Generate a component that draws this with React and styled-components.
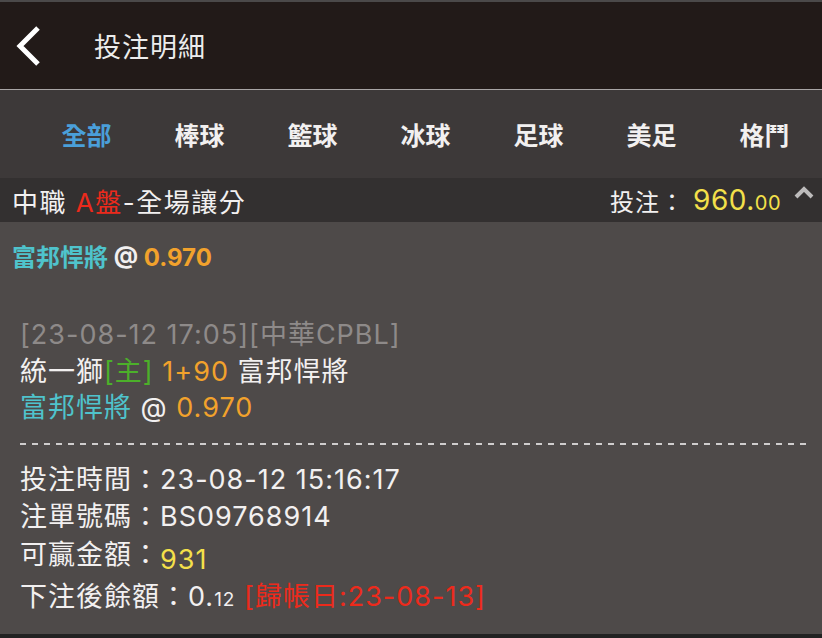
import React from "react";
import { styled, createGlobalStyle } from "styled-components";

/***********************Styles*************************/
//variables
const cjk = `"Inter", "Noto Sans CJK TC", sans-serif`;
const white = "#f2f0f0";
const teal = "#4fc3cc";
const orange = "#f2a22c";
const yellow = "#f4e04a";
const red = "#ec2a1c";
const green = "#4cb02a";
//variables

const Global = createGlobalStyle`
  body {
    margin: 0;
    background: #4e4a49;
    font-family: ${cjk};
    color: ${white};
  }
`;

const Page = styled.div`
  height: 100vh;
  display: flex;
  flex-direction: column;
  background: #4e4a49;
`;

const Header = styled.header`
  height: 87px;
  border-top: 2px solid #4b4949;
  border-bottom: 1px solid #a9a5a5;
  background: #221a18;
  display: flex;
  align-items: center;
  padding-left: 14px;
`;

const Title = styled.h1`
  margin: 0 0 0 50px;
  font-size: 27px;
  font-weight: 400;
  letter-spacing: 1px;
  color: #ececec;
`;

const Tabs = styled.nav`
  height: 88px;
  background: #3d3939;
  display: flex;
  padding-left: 30px;
`;

const Tab = styled.div`
  width: 113px;
  flex-shrink: 0;
  display: flex;
  align-items: center;
  justify-content: center;
  font-size: 25px;
  font-weight: 700;
  color: ${(p) => (p.$active ? "#4a9fd9" : white)};
`;

const SubBar = styled.div`
  height: 44px;
  background: #333030;
  display: flex;
  align-items: center;
  justify-content: space-between;
  padding: 0 7px 0 12px;
  font-size: 26px;
  letter-spacing: 1.5px;
`;

const Stake = styled.div`
  display: flex;
  align-items: center;
  font-size: 24px;
  letter-spacing: 1px;
`;

const Amount = styled.span`
  color: ${yellow};
  font-size: 28px;
  letter-spacing: 0.5px;
  margin-left: 8px;
`;

const Small = styled.span`
  font-size: ${(p) => p.$size || "19px"};
`;

const Content = styled.main`
  flex: 1;
  padding: 18px 0 0 12px;
`;

const Pick = styled.div`
  font-size: 24px;
  font-weight: 700;
  line-height: 36px;
`;

const Block = styled.div`
  margin-top: 41px;
  padding-left: 8px;
  font-size: 27px;
  letter-spacing: 1px;
  line-height: 36.5px;
`;

const Line = styled.div`
  white-space: nowrap;
`;

const Dash = styled.div`
  height: 2px;
  width: 788px;
  margin: 16px 0 16px;
  background: repeating-linear-gradient(90deg, #cfcdcd 0 6px, transparent 6px 12px);
`;

const Detail = styled.div`
  line-height: 37.5px;
`;

const C = styled.span`
  color: ${(p) => p.$c};
`;

const Drop = styled.span`
  color: ${yellow};
  vertical-align: -5px;
`;

const Footer = styled.div`
  height: 4px;
  background: #222;
`;

/***********************Component*************************/

const Back = () => (
  <svg width="30" height="44" viewBox="0 0 30 44">
    <path d="M24 4 L6 22 L24 40" fill="none" stroke="#fff" strokeWidth="5" />
  </svg>
);

const Up = () => (
  <svg width="22" height="14" viewBox="0 0 22 14" style={{ alignSelf: "flex-start", margin: "2px 0 0 12px" }}>
    <path d="M3 12 L11 4 L19 12" fill="none" stroke="#bdbbbb" strokeWidth="4" />
  </svg>
);

const tabs = ["全部", "棒球", "籃球", "冰球", "足球", "美足", "格鬥"];

const App = () => {
  return (
    <Page>
      <Global />
      <Header>
        <Back />
        <Title>投注明細</Title>
      </Header>
      <Tabs>
        {tabs.map((t, i) => (
          <Tab key={t} $active={i === 0}>
            {t}
          </Tab>
        ))}
      </Tabs>
      <SubBar>
        <div>
          中職 <C $c={red}>A盤</C>-全場讓分
        </div>
        <Stake>
          投注：
          <Amount>
            960.<Small $size="20px">00</Small>
          </Amount>
          <Up />
        </Stake>
      </SubBar>
      <Content>
        <Pick>
          <C $c={teal}>富邦悍將</C> @ <C $c={orange}>0.970</C>
        </Pick>
        <Block>
          <Line>
            <C $c="#8e8a89">[23-08-12 17:05][中華CPBL]</C>
          </Line>
          <Line>
            統一獅<C $c={green}>[主]</C> <C $c={orange}>1+90</C> 富邦悍將
          </Line>
          <Line>
            <C $c={teal}>富邦悍將</C> @ <C $c={orange}>0.970</C>
          </Line>
          <Dash />
          <Detail>
            <Line>投注時間：23-08-12 15:16:17</Line>
            <Line>注單號碼：BS09768914</Line>
            <Line>
              可贏金額：<Drop>931</Drop>
            </Line>
            <Line>
              下注後餘額：0.<Small>12</Small> <C $c={red}>[歸帳日:23-08-13]</C>
            </Line>
          </Detail>
        </Block>
      </Content>
      <Footer />
    </Page>
  );
};

export default App;
